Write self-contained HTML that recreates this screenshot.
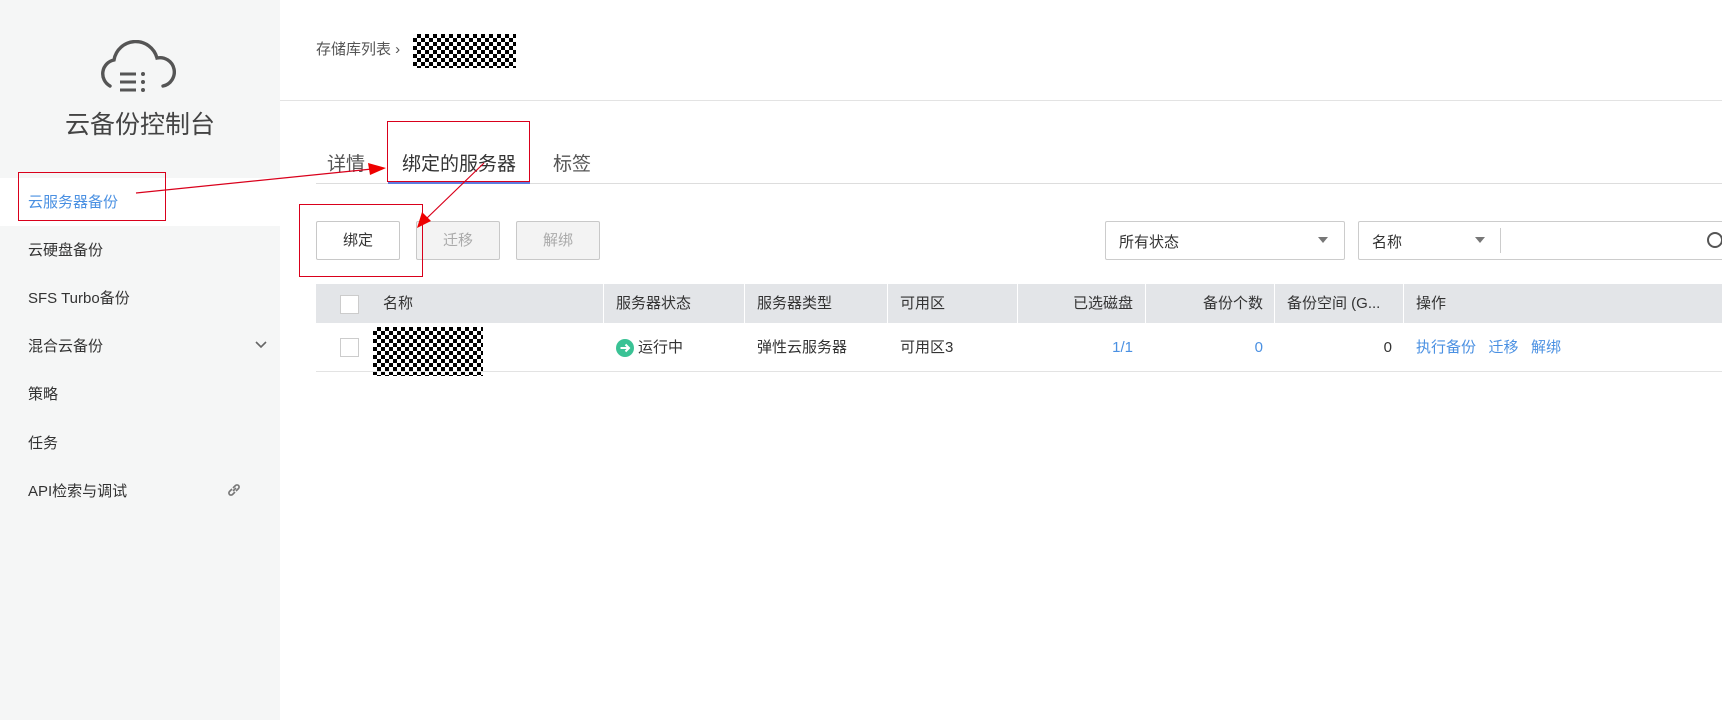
<!DOCTYPE html>
<html><head><meta charset="utf-8"><style>
*{margin:0;padding:0;box-sizing:border-box}
body{width:1722px;height:720px;overflow:hidden;background:#fff;font-family:"Liberation Sans","Noto Sans CJK SC",sans-serif;color:#252b3a;position:relative;font-size:15px}
.abs{position:absolute}
.side{left:0;top:0;width:280px;height:720px;background:#f5f6f6}
.mi{position:absolute;left:28px;font-size:15px;color:#333;line-height:20px}
.chk{background-color:#fff;background-image:linear-gradient(45deg,#000 25%,transparent 25%,transparent 75%,#000 75%),linear-gradient(45deg,#000 25%,transparent 25%,transparent 75%,#000 75%);background-size:8px 8px;background-position:0 0,4px 4px}
.btn{position:absolute;top:221px;height:39px;width:84px;border:1px solid #c8c8c8;text-align:center;line-height:37px;font-size:15px;border-radius:2px}
.th{position:absolute;top:284px;height:39px;line-height:39px;font-size:15px;color:#333}
.td{position:absolute;top:338px;line-height:20px;font-size:15px;color:#333}
.sep{position:absolute;top:284px;width:1px;height:39px;background:#fff}
.red{position:absolute;border:1px solid #d9001b}
.blue{color:#4a90e2}
</style></head><body>
<div class="abs side"></div>
<div class="abs" style="left:0;top:178px;width:280px;height:48px;background:#fff"></div>
<svg class="abs" style="left:98px;top:40px" width="78" height="54" viewBox="0 0 78 54">
<path d="M12 46 A14 14 0 0 1 16 20 A22 22 0 0 1 59 18 A14 14 0 0 1 65 46" fill="none" stroke="#555" stroke-width="3.4" stroke-linecap="round"/>
<line x1="22" y1="34" x2="38" y2="34" stroke="#555" stroke-width="3"/>
<line x1="22" y1="42" x2="38" y2="42" stroke="#555" stroke-width="3"/>
<line x1="22" y1="50" x2="38" y2="50" stroke="#555" stroke-width="3"/>
<circle cx="45" cy="34" r="2" fill="#555"/><circle cx="45" cy="42" r="2" fill="#555"/><circle cx="45" cy="50" r="2" fill="#555"/>
</svg>
<div class="abs" style="left:0;width:280px;top:105px;text-align:center;font-size:25px;color:#444">云备份控制台</div>
<div class="mi blue" style="top:193px">云服务器备份</div>
<div class="mi" style="top:241px">云硬盘备份</div>
<div class="mi" style="top:289px">SFS Turbo备份</div>
<div class="mi" style="top:337px">混合云备份</div>
<svg class="abs" style="left:254px;top:340px" width="14" height="10"><path d="M2 2 L7 7 L12 2" fill="none" stroke="#666" stroke-width="1.6"/></svg>
<div class="mi" style="top:385px">策略</div>
<div class="mi" style="top:434px">任务</div>
<div class="mi" style="top:482px">API检索与调试</div>
<svg class="abs" style="left:226px;top:482px" width="16" height="16" viewBox="0 0 16 16"><path d="M7 9 L10 6 M6 7 L3.5 9.5 a2 2 0 0 0 3 3 L9 10 M10 9 L12.5 6.5 a2 2 0 0 0 -3 -3 L7 6" fill="none" stroke="#777" stroke-width="1.6"/></svg>

<div class="abs" style="left:316px;top:38px;font-size:15px;color:#555">存储库列表 ›</div>
<div class="abs chk" style="left:413px;top:34px;width:103px;height:34px"></div>
<div class="abs" style="left:280px;top:100px;width:1442px;height:1px;background:#e3e3e3"></div>

<div class="abs" style="left:327px;top:149px;font-size:19px;color:#555">详情</div>
<div class="abs" style="left:402px;top:149px;font-size:19px;color:#333">绑定的服务器</div>
<div class="abs" style="left:553px;top:149px;font-size:19px;color:#555">标签</div>
<div class="abs" style="left:316px;top:183px;width:1406px;height:1px;background:#ddd"></div>
<div class="abs" style="left:388px;top:181px;width:142px;height:3px;background:#5e7ce0"></div>

<div class="btn" style="left:316px;color:#333;background:#fff">绑定</div>
<div class="btn" style="left:416px;color:#aaa;background:#f3f3f3">迁移</div>
<div class="btn" style="left:516px;color:#aaa;background:#f3f3f3">解绑</div>

<div class="abs" style="left:1105px;top:221px;width:240px;height:39px;border:1px solid #ccc;border-radius:2px"></div>
<div class="abs" style="left:1119px;top:231px;font-size:15px;color:#333">所有状态</div>
<div class="abs" style="left:1318px;top:237px;border:5px solid transparent;border-top:6px solid #777"></div>
<div class="abs" style="left:1358px;top:221px;width:380px;height:39px;border:1px solid #ccc;border-radius:2px"></div>
<div class="abs" style="left:1372px;top:231px;font-size:15px;color:#333">名称</div>
<div class="abs" style="left:1475px;top:237px;border:5px solid transparent;border-top:6px solid #777"></div>
<div class="abs" style="left:1500px;top:228px;width:1px;height:25px;background:#ccc"></div>
<div class="abs" style="left:1707px;top:232px;width:16px;height:16px;border:2px solid #555;border-radius:50%"></div>

<div class="abs" style="left:316px;top:284px;width:1406px;height:39px;background:#e3e5e8"></div>
<div class="sep" style="left:603px"></div><div class="sep" style="left:744px"></div><div class="sep" style="left:887px"></div><div class="sep" style="left:1017px"></div><div class="sep" style="left:1145px"></div><div class="sep" style="left:1274px"></div><div class="sep" style="left:1403px"></div>
<div class="abs" style="left:340px;top:295px;width:19px;height:19px;background:#fff;border:1px solid #ccc"></div>
<div class="th" style="left:383px">名称</div>
<div class="th" style="left:616px">服务器状态</div>
<div class="th" style="left:757px">服务器类型</div>
<div class="th" style="left:900px">可用区</div>
<div class="th" style="left:1017px;width:116px;text-align:right">已选磁盘</div>
<div class="th" style="left:1145px;width:118px;text-align:right">备份个数</div>
<div class="th" style="left:1287px">备份空间 (G...</div>
<div class="th" style="left:1416px">操作</div>

<div class="abs" style="left:340px;top:338px;width:19px;height:19px;background:#fff;border:1px solid #ccc"></div>
<div class="abs chk" style="left:373px;top:327px;width:110px;height:49px"></div>
<svg class="abs" style="left:616px;top:339px" width="18" height="18" viewBox="0 0 18 18"><circle cx="9" cy="9" r="9" fill="#3ac295"/><path d="M4.5 9 H12.5 M9.5 5.5 L13 9 L9.5 12.5" fill="none" stroke="#fff" stroke-width="2"/></svg>
<div class="td" style="left:638px">运行中</div>
<div class="td" style="left:757px">弹性云服务器</div>
<div class="td" style="left:900px">可用区3</div>
<div class="td blue" style="left:1017px;width:116px;text-align:right">1/1</div>
<div class="td blue" style="left:1145px;width:118px;text-align:right">0</div>
<div class="td" style="left:1274px;width:118px;text-align:right">0</div>
<div class="td blue" style="left:1416px">执行备份&nbsp;&nbsp;&nbsp;迁移&nbsp;&nbsp;&nbsp;解绑</div>
<div class="abs" style="left:316px;top:371px;width:1406px;height:1px;background:#e3e3e3"></div>

<div class="red" style="left:18px;top:172px;width:148px;height:49px"></div>
<div class="red" style="left:387px;top:121px;width:143px;height:61px"></div>
<div class="red" style="left:299px;top:204px;width:124px;height:73px"></div>
<svg class="abs" style="left:0;top:0" width="1722" height="720">
<line x1="136" y1="193" x2="372" y2="169" stroke="#d9001b" stroke-width="1.2"/>
<polygon points="386,168 368,163 370,175" fill="#e00"/>
<line x1="484" y1="163" x2="426" y2="219" stroke="#d9001b" stroke-width="1.2"/>
<polygon points="417,228 422,212 431,221" fill="#e00"/>
</svg>
</body></html>
